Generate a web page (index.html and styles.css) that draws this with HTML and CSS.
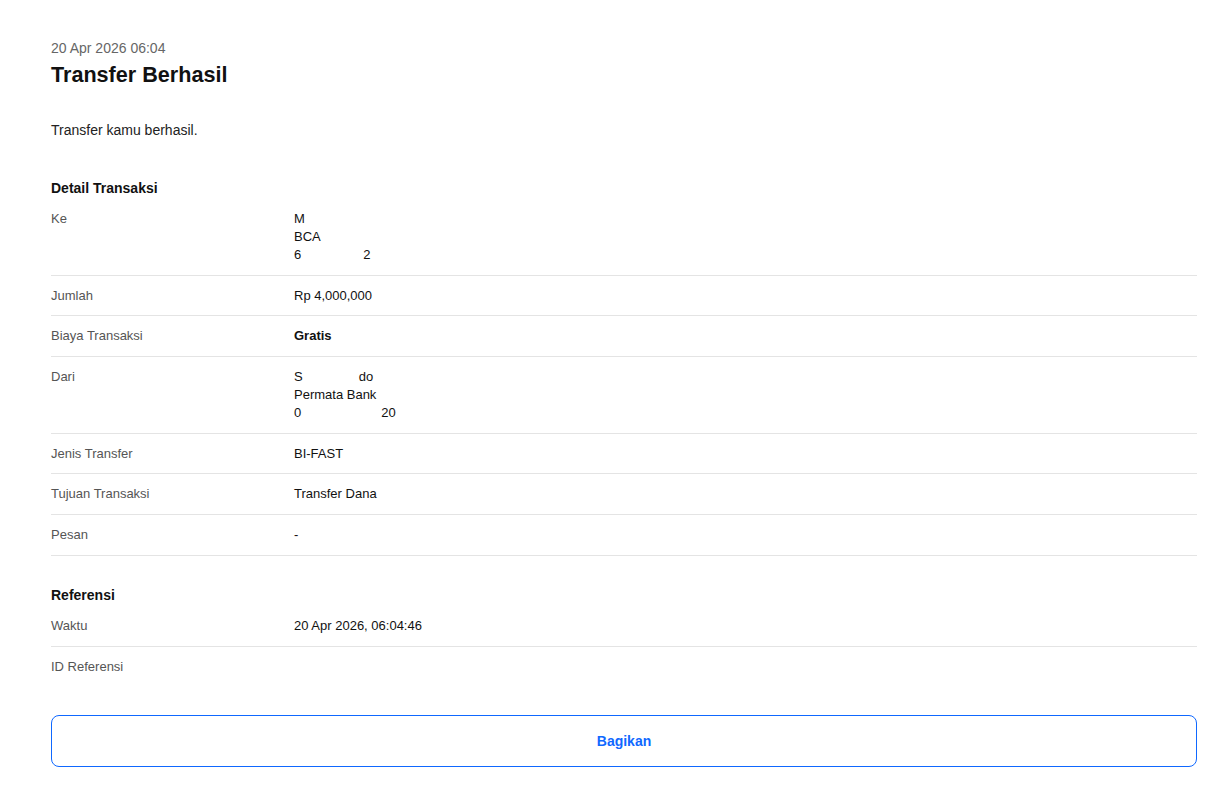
FILE: index.html
```html
<!DOCTYPE html>
<html lang="en">
<head>
  <meta charset="UTF-8" />
  <meta name="viewport" content="width=device-width, initial-scale=1.0"/>
  <title>Transfer Berhasil</title>
  <link rel="stylesheet" href="styles.css">
</head>
<body>
  <div class="page">
    <p class="date">20 Apr 2026 06:04</p>
    <h1 class="title">Transfer Berhasil</h1>
    <p class="message">Transfer kamu berhasil.</p>

    <h2 class="section">Detail Transaksi</h2>
    <div class="row">
      <div class="label">Ke</div>
      <div class="value">
        <div>M</div>
        <div>BCA</div>
        <div>6<span class="mask mask-acc"></span>2</div>
      </div>
    </div>
    <div class="row">
      <div class="label">Jumlah</div>
      <div class="value">Rp 4,000,000</div>
    </div>
    <div class="row">
      <div class="label">Biaya Transaksi</div>
      <div class="value bold">Gratis</div>
    </div>
    <div class="row">
      <div class="label">Dari</div>
      <div class="value">
        <div>S<span class="mask mask-name"></span>do</div>
        <div>Permata Bank</div>
        <div>0<span class="mask mask-from"></span>20</div>
      </div>
    </div>
    <div class="row">
      <div class="label">Jenis Transfer</div>
      <div class="value">BI-FAST</div>
    </div>
    <div class="row">
      <div class="label">Tujuan Transaksi</div>
      <div class="value">Transfer Dana</div>
    </div>
    <div class="row">
      <div class="label">Pesan</div>
      <div class="value">-</div>
    </div>

    <h2 class="section section-ref">Referensi</h2>
    <div class="row row-ref">
      <div class="label">Waktu</div>
      <div class="value">20 Apr 2026, 06:04:46</div>
    </div>
    <div class="row row-last">
      <div class="label">ID Referensi</div>
      <div class="value"></div>
    </div>

    <button class="share">Bagikan</button>
  </div>
</body>
</html>
```

FILE: styles.css
```css
body {
  margin: 0;
  background: #fff;
  font-family: "Liberation Sans", Arial, sans-serif;
  color: #1a1a1a;
}

.page {
  width: 1146px;
  margin-left: 51px;
  padding-top: 38px;
}

.date {
  margin: 0;
  font-size: 14px;
  line-height: 20px;
  color: #666;
}

.title {
  margin: 3px 0 0;
  font-size: 21.6px;
  line-height: 28px;
  font-weight: bold;
  color: #111;
}

.message {
  margin: 31px 0 0;
  font-size: 14px;
  line-height: 20px;
  color: #222;
}

.section {
  margin: 38px 0 1px;
  font-size: 14px;
  line-height: 20px;
  font-weight: bold;
  color: #111;
}

.section-ref {
  margin-top: 29px;
}

.row {
  display: flex;
  padding: 11px 0 10.67px;
  border-bottom: 1px solid #e4e4e4;
  font-size: 13px;
  line-height: 18px;
}

.row-ref {
  padding-bottom: 11.5px;
}

.row-last {
  border-bottom: none;
}

.label {
  width: 243px;
  flex-shrink: 0;
  color: #555;
}

.value {
  color: #111;
}

.bold {
  font-weight: bold;
}

.mask {
  display: inline-block;
  height: 1px;
}

.mask-acc { width: 62px; }
.mask-name { width: 56px; }
.mask-from { width: 80px; }

.share {
  display: block;
  width: 100%;
  height: 52px;
  margin-top: 28px;
  border: 1px solid #0f68ff;
  border-radius: 8px;
  background: #fff;
  color: #0f68ff;
  font-family: "Liberation Sans", Arial, sans-serif;
  font-size: 14px;
  font-weight: bold;
  cursor: pointer;
}
```
